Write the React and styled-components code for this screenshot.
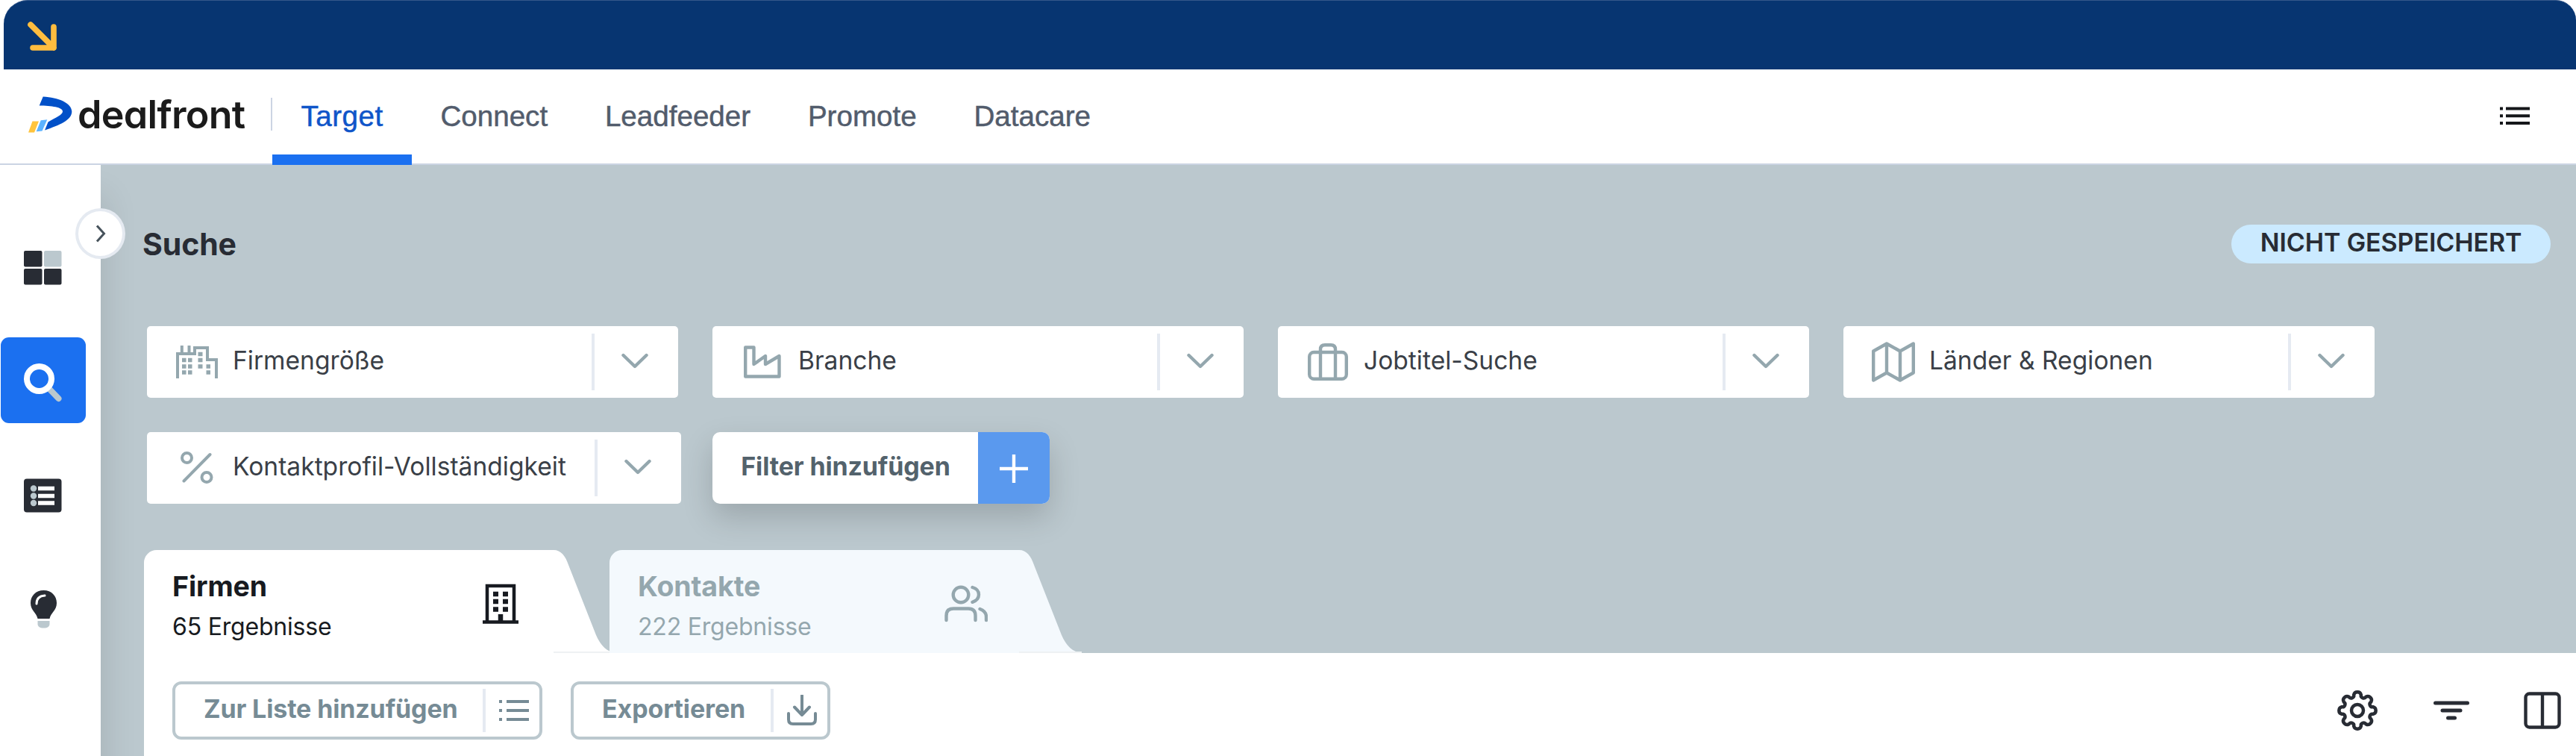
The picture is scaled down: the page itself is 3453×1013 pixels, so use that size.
import React from "react";
import styled, { createGlobalStyle } from "styled-components";

const navItems = ["Target", "Connect", "Leadfeeder", "Promote", "Datacare"];

const App = () => {
  return (
    <Page>
      <GlobalStyle />
      <TopBar>
        <ArrowIcon />
      </TopBar>
      <Header>
        <Brand>
          <LogoMark />
          <BrandName>dealfront</BrandName>
        </Brand>
        <Nav>
          {navItems.map((item) => (
            <NavItem key={item} $active={item === "Target"}>
              {item}
            </NavItem>
          ))}
        </Nav>
        <HeaderMenu>
          <MenuIcon />
        </HeaderMenu>
      </Header>
      <Body>
        <Sidebar>
          <SideItem>
            <DashboardIcon />
          </SideItem>
          <SideItem $active>
            <SearchIcon />
          </SideItem>
          <SideItem>
            <ListCardIcon />
          </SideItem>
          <SideItem>
            <BulbIcon />
          </SideItem>
          <Toggle>
            <ToggleArrow />
          </Toggle>
        </Sidebar>
        <Main>
          <TitleRow>
            <Title>Suche</Title>
            <Badge>NICHT GESPEICHERT</Badge>
          </TitleRow>
          <Filters>
            <FilterSelect icon={<CityIcon />} label="Firmengröße" />
            <FilterSelect icon={<FactoryIcon />} label="Branche" />
            <FilterSelect icon={<SuitcaseIcon />} label="Jobtitel-Suche" />
            <FilterSelect icon={<MapIcon />} label="Länder & Regionen" />
            <FilterSelect
              wide
              icon={<PercentIcon />}
              label="Kontaktprofil-Vollständigkeit"
            />
            <AddFilter>
              <AddText>Filter hinzufügen</AddText>
              <AddPlus>
                <PlusIcon />
              </AddPlus>
            </AddFilter>
          </Filters>
          <Tabs>
            <ResultTab active title="Firmen" count="65 Ergebnisse" icon={<OfficeIcon />} />
            <ResultTab title="Kontakte" count="222 Ergebnisse" icon={<UsersIcon />} />
          </Tabs>
          <Panel>
            <ActionButton>
              <ActionText>Zur Liste hinzufügen</ActionText>
              <ActionIcon>
                <BulletsIcon />
              </ActionIcon>
            </ActionButton>
            <ActionButton>
              <ActionText>Exportieren</ActionText>
              <ActionIcon>
                <DownloadIcon />
              </ActionIcon>
            </ActionButton>
            <Tools>
              <GearIcon />
              <FilterIcon />
              <ColumnsIcon />
            </Tools>
          </Panel>
        </Main>
      </Body>
    </Page>
  );
};

export default App;

const FilterSelect = ({ icon, label, wide }) => (
  <FilterBox $wide={wide}>
    <FilterIconSlot>{icon}</FilterIconSlot>
    <FilterLabel>{label}</FilterLabel>
    <FilterArrow>
      <ChevronIcon />
    </FilterArrow>
  </FilterBox>
);

const ResultTab = ({ title, count, icon, active }) => (
  <Tab $active={active}>
    <TabBody>
      <TabText $active={active}>
        <TabTitle>{title}</TabTitle>
        <TabCount>{count}</TabCount>
      </TabText>
      <TabIcon $active={active}>{icon}</TabIcon>
    </TabBody>
    <TabEdge viewBox="0 0 84 138">
      <path d="M0 0C10 0 16 8 20 20L57 114C63 128 72 137 84 138H0Z" fill="currentColor" />
      <path d="M0 137H84" stroke="#eef1f3" strokeWidth="2" />
    </TabEdge>
  </Tab>
);

/* icons */

const Stroke = ({ w, h, width = 4, children }) => (
  <Svg
    width={w}
    height={h}
    viewBox={`0 0 ${w} ${h}`}
    fill="none"
    stroke="currentColor"
    strokeWidth={width}
  >
    {children}
  </Svg>
);

const ArrowIcon = () => (
  <Svg width="40" height="40" viewBox="0 0 40 40" fill="none" stroke="#ffbd3f" strokeWidth="7.6" strokeLinecap="round" strokeLinejoin="round">
    <path d="M4 4L35 35M35 7V35H7" />
  </Svg>
);

const LogoMark = () => (
  <Svg width="59" height="50" viewBox="0 0 59 50">
    <path d="M19.7 1.5C40 2.5 58.3 10 58.3 21.5C58.3 33 42 39.5 22 46.5L26.5 35.5C37 29.5 46 26 46 21.3C46 15.5 31 13.7 14.7 13.5Z" fill="#0150c8" />
    <path d="M5.5 34.5H14L8 49.5H0Z" fill="#ffc43d" />
    <path d="M16.7 33.2L25.3 32.2L18.5 47.5L10.7 48.3Z" fill="#5cb3ff" />
  </Svg>
);

const MenuIcon = () => (
  <Stroke w={40} h={24}>
    <path d="M8 2.5H40M8 12.3H40M8 22H40M0 2.5H4M0 12.3H4M0 22H4" />
  </Stroke>
);

const DashboardIcon = () => (
  <Svg width="114" height="115" viewBox="0 0 114 115" fill="#282c34">
    <rect x="31" y="37" width="24.5" height="21.5" rx="2" />
    <rect x="58" y="37" width="23.5" height="21.5" rx="2" fill="#bbc8ce" />
    <rect x="31" y="61" width="24.5" height="21.5" rx="2" />
    <rect x="58" y="61" width="23.5" height="21.5" rx="2" />
  </Svg>
);

const SearchIcon = () => (
  <Svg width="114" height="115" viewBox="0 0 114 115" fill="none">
    <path d="M65 69L77.5 82" stroke="#bbc8ce" strokeWidth="8" strokeLinecap="round" />
    <circle cx="51.5" cy="55.5" r="16.5" stroke="#fff" strokeWidth="8" />
  </Svg>
);

const ListCardIcon = () => (
  <Svg width="114" height="115" viewBox="0 0 114 115">
    <rect x="31" y="36.5" width="50.5" height="45" rx="4" fill="#282c34" />
    <g fill="#bbc8ce">
      <circle cx="44" cy="49.5" r="4.2" />
      <circle cx="44" cy="59.5" r="4.2" />
      <circle cx="44" cy="69" r="4.2" />
    </g>
    <path d="M50 49.5H72M50 59.5H72M50 69H72" stroke="#fff" strokeWidth="5.5" />
  </Svg>
);

const BulbIcon = () => (
  <Svg width="114" height="115" viewBox="0 0 114 115">
    <path d="M57.5 33C47 33 40 40.5 40 50C40 60 48 63 49.5 71H65.5C67 63 75 60 75 50C75 40.5 68 33 57.5 33Z" fill="#282c34" />
    <path d="M49.5 74H65.5V78C65.5 81.5 63 83.5 57.5 83.5C52 83.5 49.5 81.5 49.5 78Z" fill="#bbc8ce" />
    <path d="M48 51C48 44.5 52 40.5 59 40" stroke="#fff" strokeWidth="3" fill="none" strokeLinecap="round" />
  </Svg>
);

const ToggleArrow = () => (
  <Stroke w={16} h={26} width={3}>
    <path d="M3 2.5L12.5 13L3 23.5" />
  </Stroke>
);

const ChevronIcon = () => (
  <Stroke w={36} h={22} width={4.4}>
    <path d="M2.5 3L18 18L33.5 3" strokeLinecap="round" strokeLinejoin="round" />
  </Stroke>
);

const CityIcon = () => (
  <Stroke w={56} h={44}>
    <path d="M2 44V11H25V3H42V19H54V44M7.8 0V11M17.5 0V11" />
    <path d="M8 19.5H13.5M8 28H13.5M8 36H13.5M16 19.5H21.5M16 28H21.5M16 36H21.5" strokeWidth="5.5" />
    <path d="M29.5 11.5H35.5M29.5 19.5H35.5M29.5 28H35.5M40.5 28H46M40.5 36H46" strokeWidth="5.5" />
  </Stroke>
);

const FactoryIcon = () => (
  <Stroke w={50} h={44} width={4.4}>
    <path d="M2.2 2.5H13.5V25L29 14V25L47.5 14V41.5H2.2Z" strokeLinejoin="round" />
  </Stroke>
);

const SuitcaseIcon = () => (
  <Stroke w={54} h={50} width={4.4}>
    <rect x="2.2" y="12" width="49.6" height="35.8" rx="6" />
    <path d="M17 48V8Q17 2.2 23 2.2H31Q37 2.2 37 8V48" />
  </Stroke>
);

const MapIcon = () => (
  <Stroke w={58} h={54} width={4.4}>
    <path d="M2.2 12.5L20 2.5L38 12.5L55.8 2.5V41.5L38 51.5L20 41.5L2.2 51.5ZM20 2.5V41.5M38 12.5V51.5" strokeLinejoin="round" />
  </Stroke>
);

const PercentIcon = () => (
  <Stroke w={44} h={46}>
    <circle cx="8.5" cy="9.5" r="6.5" />
    <circle cx="35" cy="35.5" r="6.5" />
    <path d="M39.5 5L4.5 40.5" strokeLinecap="round" />
  </Stroke>
);

const PlusIcon = () => (
  <Stroke w={38} h={40} width={4.4}>
    <path d="M19 1V39M0 20H38" />
  </Stroke>
);

const OfficeIcon = () => (
  <Stroke w={48} h={54} width={4.5}>
    <path d="M6 51V3H42V51M0 51.5H48" />
    <path d="M14 14H21M27 14H34M14 24H21M27 24H34M14 34.5H21M27 34.5H34" strokeWidth="6.5" />
    <path d="M24 41V50" strokeWidth="6.5" />
  </Stroke>
);

const UsersIcon = () => (
  <Stroke w={58} h={50} width={4.4}>
    <g strokeLinecap="round">
      <circle cx="22" cy="13" r="10.3" />
      <path d="M2.5 47V41Q2.5 31.5 12 31.5H32Q41.5 31.5 41.5 41V47" />
      <path d="M37.5 3C43 4.5 46 8 46 12.8C46 17.5 43 21 37.5 22.8M47.5 32C53 34 56 37.5 56 42.5V47" />
    </g>
  </Stroke>
);

const BulletsIcon = () => (
  <Stroke w={40} h={30}>
    <path d="M10 3H40M10 15H40M10 27H40M0 3H4M0 15H4M0 27H4" />
  </Stroke>
);

const DownloadIcon = () => (
  <Stroke w={40} h={42}>
    <path d="M20 1V27M10 16.5L20 27L30 16.5M2 25V33Q2 39 8 39H32Q38 39 38 33V25" strokeLinecap="round" strokeLinejoin="round" />
  </Stroke>
);

// eight rounded teeth around a circle
const gearPath = () => {
  const at = (deg) => {
    const a = ((deg - 90) * Math.PI) / 180;
    return `${(29 + 21.5 * Math.cos(a)).toFixed(2)} ${(29 + 21.5 * Math.sin(a)).toFixed(2)}`;
  };
  let d = `M${at(-13)}`;
  for (let i = 0; i < 8; i++) {
    d += `A5 5 0 0 1 ${at(i * 45 + 13)}A3.6 3.6 0 0 0 ${at(i * 45 + 32)}`;
  }
  return d + "Z";
};

const GearIcon = () => (
  <Stroke w={58} h={58} width={4.5}>
    <path d={gearPath()} />
    <circle cx="29" cy="29" r="8" />
  </Stroke>
);

const FilterIcon = () => (
  <Stroke w={48} h={26} width={5}>
    <path d="M2.5 3H45.5M12 13H36M19.5 23H28.5" strokeLinecap="round" />
  </Stroke>
);

const ColumnsIcon = () => (
  <Stroke w={50} h={50} width={4.4}>
    <rect x="2.5" y="2.5" width="45" height="45" rx="5" />
    <path d="M25 2.5V47.5" />
  </Stroke>
);

const GlobalStyle = createGlobalStyle`
  * {
    box-sizing: border-box;
  }
  body {
    margin: 0;
    background: #fff;
    font-family: Inter, "Liberation Sans", sans-serif;
  }
`;

const Svg = styled.svg`
  display: block;
  flex-shrink: 0;
`;

const Page = styled.div`
  display: flex;
  flex-direction: column;
  height: 1013px;
  overflow: hidden;
`;

const TopBar = styled.div`
  display: flex;
  align-items: center;
  height: 93px;
  margin-left: 5px;
  padding: 4px 0 0 32px;
  flex-shrink: 0;
  background: #073571;
  border-top: 1px solid #35588a;
  border-radius: 32px 27px 0 0;
`;

const Header = styled.header`
  display: flex;
  height: 128px;
  flex-shrink: 0;
  position: relative;
  z-index: 2;
  background: #fff;
  box-shadow: inset 0 -2px 0 #cbd4e3;
`;

const Brand = styled.div`
  display: flex;
  align-items: center;
  width: 365px;
  height: 44px;
  margin-top: 38px;
  padding-left: 38px;
  border-right: 2px solid #ccd4e3;
`;

const BrandName = styled.span`
  padding-top: 2px;
  margin-left: 7px;
  color: #1b1b1b;
  font-size: 52px;
  font-weight: 600;
  line-height: 44px;
  letter-spacing: -0.7px;
  font-feature-settings: "cv11";
`;

const Nav = styled.nav`
  display: flex;
`;

const NavItem = styled.a`
  padding: 0 38.4px;
  color: ${(props) => (props.$active ? "#0f55c9" : "#525c6c")};
  border-bottom: 14px solid
    ${(props) => (props.$active ? "#1b70f0" : "transparent")};
  font-family: "Liberation Sans", Arial, sans-serif;
  font-size: 38.6px;
  line-height: 125px;
  letter-spacing: ${(props) => (props.$active ? "0.5px" : "0")};
  -webkit-text-stroke: 0.5px currentColor;
`;

const HeaderMenu = styled.div`
  display: flex;
  align-items: center;
  margin-left: auto;
  padding: 0 62px 4px 0;
  color: #15171a;
`;

const Body = styled.div`
  display: flex;
  flex: 1;
  min-height: 0;
`;

const Sidebar = styled.aside`
  display: flex;
  flex-direction: column;
  gap: 38px;
  width: 135px;
  padding: 78px 0 0 1px;
  flex-shrink: 0;
  position: relative;
  z-index: 1;
  background: #fff;
  box-shadow: 8px 40px 40px rgba(0, 0, 0, 0.1);
`;

const SideItem = styled.div`
  width: 114px;
  height: 115px;
  border-radius: 11px;
  background: ${(props) => (props.$active ? "#1b70f0" : "transparent")};
`;

/* sits over the edge of the sidebar */
const Toggle = styled.button`
  display: flex;
  align-items: center;
  justify-content: center;
  position: absolute;
  top: 58px;
  right: -33px;
  width: 67px;
  height: 68px;
  padding: 0;
  border: 4px solid #e5eaf1;
  border-radius: 50%;
  background: #fff;
  color: #46525b;
`;

const Main = styled.main`
  flex: 1;
  min-width: 0;
  padding-top: 80px;
  background: #bbc8ce;
`;

const TitleRow = styled.div`
  display: flex;
  align-items: center;
  justify-content: space-between;
  height: 52px;
  padding: 0 34px 0 56px;
`;

const Title = styled.h1`
  margin: 0;
  color: #282c34;
  font-size: 41px;
  font-weight: 700;
  line-height: 52px;
  letter-spacing: -0.1px;
`;

const Badge = styled.span`
  width: 428px;
  height: 52px;
  border-radius: 26px;
  background: #cbeaff;
  color: #282c34;
  font-size: 34px;
  font-weight: 600;
  line-height: 47px;
  letter-spacing: -0.1px;
  text-align: center;
`;

const Filters = styled.div`
  display: grid;
  grid-template-columns: repeat(4, 712px);
  gap: 46px;
  margin-top: 84px;
  padding-left: 62px;
`;

const FilterBox = styled.div`
  display: flex;
  align-items: center;
  width: ${(props) => (props.$wide ? 716 : 712)}px;
  height: 96px;
  border-radius: 5px;
  background: #fff;
  color: #94a7ae;
`;

const FilterIconSlot = styled.div`
  display: flex;
  justify-content: center;
  width: 64px;
  margin-left: 35px;
`;

const FilterLabel = styled.span`
  flex: 1;
  padding: 0 0 5px 16px;
  color: #3a3f47;
  font-size: 33.6px;
  line-height: 42px;
  white-space: nowrap;
`;

const FilterArrow = styled.div`
  display: flex;
  align-items: center;
  justify-content: center;
  width: 116px;
  height: 76px;
  padding: 0 5px 2px 0;
  border-left: 4px solid #e5eaf2;
`;

const AddFilter = styled.button`
  display: flex;
  width: 452px;
  height: 96px;
  padding: 0;
  border: 0;
  border-radius: 10px;
  overflow: hidden;
  background: #fff;
  box-shadow: 0 18px 40px rgba(0, 0, 0, 0.17);
`;

const AddText = styled.span`
  width: 356px;
  padding-left: 1px;
  color: #53626c;
  font-family: Inter, sans-serif;
  font-size: 34px;
  font-weight: 700;
  line-height: 91px;
  letter-spacing: -0.15px;
  text-align: center;
`;

const AddPlus = styled.span`
  display: flex;
  align-items: center;
  justify-content: center;
  flex: 1;
  align-self: stretch;
  padding-top: 2px;
  background: #5a99ee;
  color: #fff;
`;

const Tabs = styled.div`
  display: flex;
  margin-top: 62px;
  padding-left: 58px;
`;

const Tab = styled.div`
  display: flex;
  width: 624px;
  height: 138px;
  color: ${(props) => (props.$active ? "#fff" : "#f4f9fd")};
`;

const TabBody = styled.div`
  display: flex;
  width: 549px;
  flex-shrink: 0;
  border-radius: 17px 0 0 0;
  background: currentColor;
`;

const TabEdge = styled.svg`
  display: block;
  width: 84px;
  height: 138px;
  margin-right: -9px;
  flex-shrink: 0;
`;

const TabText = styled.div`
  width: 448px;
  padding: 26px 0 0 38px;
  color: ${(props) => (props.$active ? "#171a20" : "#94a7ae")};
`;

const TabTitle = styled.h2`
  margin: 0;
  font-size: 37.5px;
  font-weight: 700;
  line-height: 46px;
  letter-spacing: -0.1px;
`;

const TabCount = styled.p`
  margin: 8px 0 0;
  font-size: 32px;
  line-height: 46px;
  letter-spacing: -0.2px;
`;

const TabIcon = styled.div`
  display: flex;
  align-items: center;
  justify-content: center;
  width: 60px;
  padding-top: 6px;
  color: ${(props) => (props.$active ? "#171a20" : "#94a7ae")};
`;

const Panel = styled.section`
  display: flex;
  align-items: flex-start;
  gap: 38px;
  height: 140px;
  margin-left: 58px;
  padding: 38px 20px 0 38px;
  background: #fff;
`;

const ActionButton = styled.button`
  display: flex;
  align-items: center;
  height: 78px;
  padding: 0;
  border: 4px solid #bbc8ce;
  border-radius: 12px;
  background: #fff;
  color: #768b95;
`;

const ActionText = styled.span`
  padding: 0 33.5px 4px 38px;
  font-family: Inter, sans-serif;
  font-size: 34px;
  font-weight: 700;
  line-height: 44px;
  letter-spacing: -0.14px;
`;

const ActionIcon = styled.span`
  display: flex;
  align-items: center;
  justify-content: center;
  width: 76px;
  height: 58px;
  padding-left: 4px;
  border-left: 4px solid #e5eaf2;
`;

const Tools = styled.div`
  display: flex;
  align-items: center;
  gap: 73px;
  height: 78px;
  margin-left: auto;
  color: #282c34;
`;
